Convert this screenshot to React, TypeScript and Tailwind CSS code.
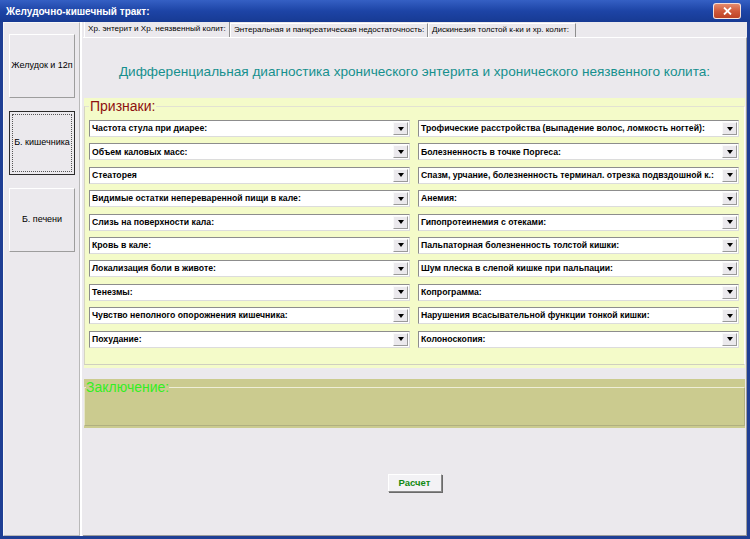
import React from "react";

const leftSigns = [
  "Частота стула при диарее:",
  "Объем каловых масс:",
  "Стеаторея",
  "Видимые остатки непереваренной пищи в кале:",
  "Слизь на поверхности кала:",
  "Кровь в кале:",
  "Локализация боли в животе:",
  "Тенезмы:",
  "Чувство неполного опорожнения кишечника:",
  "Похудание:",
];

const rightSigns = [
  "Трофические расстройства (выпадение волос, ломкость ногтей):",
  "Болезненность в точке Поргеса:",
  "Спазм, урчание, болезненность терминал. отрезка подвздошной к.:",
  "Анемия:",
  "Гипопротеинемия с отеками:",
  "Пальпаторная болезненность толстой кишки:",
  "Шум плеска в слепой кишке при пальпации:",
  "Копрограмма:",
  "Нарушения всасывательной функции тонкой кишки:",
  "Колоноскопия:",
];

const tabs = [
  { label: "Хр. энтерит и Хр. неязвенный колит:", w: "w-[146px]", active: true },
  { label: "Энтеральная и панкреатическая недостаточность:", w: "w-[198px]", active: false },
  { label: "Дискинезия толстой к-ки и хр. колит:", w: "w-[148px]", active: false },
];

function Combo({ label }: { label: string }) {
  return (
    <div className="flex h-[17px] border border-t-[#8d8d8d] border-l-[#8d8d8d] border-b-[#dcdcdc] border-r-[#dcdcdc] bg-white">
      <div className="flex min-w-0 flex-1 items-center overflow-hidden whitespace-nowrap pl-[2px] text-[8.7px] font-bold leading-none text-black">
        {label}
      </div>
      {/* dropdown arrow button */}
      <div className="m-px flex w-[15px] items-center justify-center border border-t-[#fafafa] border-l-[#fafafa] border-b-[#9a9a9a] border-r-[#9a9a9a] bg-[#ebe9ed]">
        <span className="h-0 w-0 border-x-[3.5px] border-t-[4px] border-x-transparent border-t-black" />
      </div>
    </div>
  );
}

function SideButton({ label, focused }: { label: string; focused?: boolean }) {
  return (
    <div
      className={
        "flex h-[64px] w-[66px] items-center justify-center border text-[9px] text-black " +
        (focused
          ? "border-[#2b2b2b] p-[2px]"
          : "border-t-white border-l-white border-b-[#9d9d9d] border-r-[#9d9d9d]")
      }
    >
      {focused ? (
        <div className="flex h-full w-full items-center justify-center border border-dotted border-[#555]">
          {label}
        </div>
      ) : (
        label
      )}
    </div>
  );
}

export default function App() {
  return (
    <div
      className="flex h-[539px] w-[750px] flex-col bg-[#1f3f94] px-[3px] pb-[3px]"
      style={{ fontFamily: '"Liberation Sans", Arial, sans-serif' }}
    >
      {/* title bar */}
      <div className="-mx-[3px] flex h-[22px] items-center justify-between bg-gradient-to-b from-[#3560c4] via-[#1d44a6] to-[#173a93] pl-[6px] pr-[9px]">
        <span className="text-[10px] font-bold text-white">Желудочно-кишечный тракт:</span>
        <div className="flex h-[16px] w-[28px] items-center justify-center rounded-[3px] border border-white/80 bg-gradient-to-b from-[#e58a6c] via-[#d05a3c] to-[#bd4225]">
          <svg width="9" height="8" viewBox="0 0 9 8">
            <path d="M1 0.5 L8 7.5 M8 0.5 L1 7.5" stroke="white" strokeWidth="1.8" />
          </svg>
        </div>
      </div>

      <div className="flex flex-1 bg-[#ebe9ed]">
        {/* left navigation panel */}
        <div className="flex w-[77px] flex-col items-start gap-[13px] border border-t-[#f7f7f7] border-l-[#f7f7f7] border-b-[#b9b9b9] border-r-[#b9b9b9] pl-[5px] pt-[11px]">
          <SideButton label="Желудок и 12п" />
          <SideButton label="Б. кишечника" focused />
          <SideButton label="Б. печени" />
        </div>

        {/* tab control */}
        <div className="flex flex-1 flex-col border-l-2 border-white pl-px">
          <div className="flex h-[15px] items-end pl-[1px]">
            {tabs.map((t) => (
              <div
                key={t.label}
                className={
                  "flex items-center whitespace-nowrap border-r border-r-[#8e8e8e] pl-[3px] text-[8.1px] leading-none text-black " +
                  t.w +
                  (t.active
                    ? " h-[15px] border-l border-l-white"
                    : " h-[14px] border-l border-t border-l-white border-t-white")
                }
              >
                {t.label}
              </div>
            ))}
          </div>

          <div className="flex flex-1 flex-col border-t border-r border-b border-t-white border-r-[#9b9b9b] border-b-[#9b9b9b] pl-[1px] pr-[1px]">
            <div className="flex h-[60px] items-center justify-center pt-[8px] text-[13.6px] text-[#16908d]">
              Дифференциальная диагностика хронического энтерита и хронического неязвенного колита:
            </div>

            {/* Признаки group */}
            <div className="h-[270px] bg-[#f4fbc9] pt-[1px]">
              <fieldset className="h-[266px] border border-l-[#d6d6c0] border-t-[#e2e2d2] border-r-white border-b-[#cfcfbf] px-[4px]">
                <legend className="ml-[0px] px-[1px] text-[14px] leading-[15px] text-[#8e1010]">Признаки:</legend>
                <div className="mt-[6px] grid grid-cols-2 gap-x-[8px] gap-y-[6.4px] pr-[1px]">
                  {leftSigns.map((l, i) => (
                    <React.Fragment key={l}>
                      <Combo label={l} />
                      <Combo label={rightSigns[i]} />
                    </React.Fragment>
                  ))}
                </div>
              </fieldset>
            </div>

            {/* Заключение group */}
            <div className="mt-[11px] h-[49px] bg-[#cbcb8f] pt-[1px]">
              <fieldset className="h-[46px] border border-l-[#e6e6c8] border-t-[#eeeed6] border-r-[#b0b080] border-b-[#b0b080]">
                <legend className="ml-[1px] px-0 text-[14px] leading-[14px] text-[#33ee22]">Заключение:</legend>
              </fieldset>
            </div>

            <div className="flex justify-center pt-[46px]">
              <div className="flex h-[18px] w-[54px] items-center justify-center border border-t-white border-l-white border-b-[#8a8a8a] border-r-[#8a8a8a] bg-[#f3f2f5] text-[9.5px] font-bold text-[#128a12] shadow-[1px_1px_0_#6a6a6a]">
                Расчет
              </div>
            </div>
          </div>
        </div>
      </div>
    </div>
  );
}
